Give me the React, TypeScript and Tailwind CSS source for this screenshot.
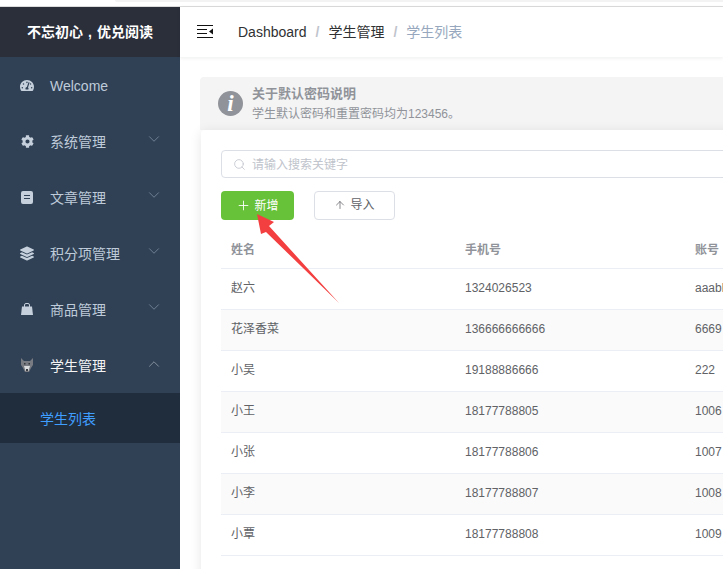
import { FaCog, FaLayerGroup, FaTachometerAlt } from "react-icons/fa";
import { ChevronDown, ChevronUp, Plus, ArrowUp, Search } from "lucide-react";

const font = "font-['Liberation_Sans','Noto_Sans_CJK_SC',sans-serif]";

function DocIcon() {
  return (
    <svg width="12" height="13" viewBox="0 0 12 13" className="text-[#c5d0dc]">
      <path fill="currentColor" fillRule="evenodd" d="M2 0h8a2 2 0 0 1 2 2v9a2 2 0 0 1-2 2H2a2 2 0 0 1-2-2V2a2 2 0 0 1 2-2zM3 4v1h6V4zm0 3v1h6V7z" />
    </svg>
  );
}

function BagIcon() {
  return (
    <svg width="12" height="12" viewBox="0 0 12 12" className="text-[#c5d0dc]">
      <path fill="currentColor" d="M1 3.5h10l1 8.5H0z" />
      <path fill="none" stroke="currentColor" d="M3.5 4V2a1.5 1.5 0 0 1 1.5-1.5h2A1.5 1.5 0 0 1 8.5 2v2" />
    </svg>
  );
}

function WolfIcon() {
  return (
    <svg width="12" height="14" viewBox="0 0 12 14">
      <path fill="#787c82" d="M0 0l3 3h6l3-3 0 7-2 3-2 4H4L2 10 0 7z" />
      <path fill="#d9dbdd" d="M3 8h6L7.5 13h-3z" />
      <rect x="5" y="11" width="2" height="2" fill="#3a3d42" />
      <rect x="3" y="5" width="1.5" height="1.5" fill="#33363b" />
      <rect x="7.5" y="5" width="1.5" height="1.5" fill="#33363b" />
    </svg>
  );
}

const menu = [
  { label: "Welcome", icon: <FaTachometerAlt size={15} className="text-[#c5d0dc]" />, arrow: false },
  { label: "系统管理", icon: <FaCog size={13} className="text-[#c5d0dc]" />, arrow: true },
  { label: "文章管理", icon: <DocIcon />, arrow: true },
  { label: "积分项管理", icon: <FaLayerGroup size={15} className="text-[#c5d0dc]" />, arrow: true },
  { label: "商品管理", icon: <BagIcon />, arrow: true },
];

const rows = [
  ["赵六", "1324026523", "aaabb"],
  ["花泽香菜", "136666666666", "6669"],
  ["小吴", "19188886666", "222"],
  ["小王", "18177788805", "1006"],
  ["小张", "18177788806", "1007"],
  ["小李", "18177788807", "1008"],
  ["小覃", "18177788808", "1009"],
];

function Sidebar() {
  return (
    <aside className="w-[180px] shrink-0 bg-[#304156] flex flex-col">
      <div className="h-[50px] bg-[#2b2f3a] flex items-center justify-center text-white text-sm font-bold">
        不忘初心<span className="mx-[5px]">,</span>优兑阅读
      </div>
      {menu.map((m) => (
        <div key={m.label} className="h-[56px] flex items-center text-sm text-[#bfcbd9]">
          <span className="w-[14px] ml-[20px] mr-[16px] flex justify-center">{m.icon}</span>
          <span className="pt-[2px]">{m.label}</span>
          {m.arrow && <ChevronDown size={18} strokeWidth={1} className="ml-auto mr-[17px] mb-[5px] text-[#8493a5]" />}
        </div>
      ))}
      <div className="h-[56px] flex items-center text-sm text-[#f4f4f5]">
        <span className="w-[14px] ml-[20px] mr-[16px] flex justify-center"><WolfIcon /></span>
        <span className="pt-[2px]">学生管理</span>
        <ChevronUp size={18} strokeWidth={1} className="ml-auto mr-[17px] mb-[3px] text-[#a0aab6]" />
      </div>
      <div className="h-[50px] bg-[#1f2d3d] flex items-center pl-[40px] pt-[2px] text-sm text-[#409eff]">学生列表</div>
    </aside>
  );
}

function Navbar() {
  return (
    <header className="h-[50px] shrink-0 bg-white shadow-[0_1px_4px_rgba(0,21,41,0.08)] flex items-center">
      <svg width="16" height="14" viewBox="0 0 16 14" className="ml-[17px]">
        <path d="M0 .5h16M0 4.5h10M0 8.5h10M0 12.5h16" stroke="#111" strokeWidth="1" />
        <path d="M16 3.5v6l-4-3z" fill="#111" />
      </svg>
      <nav className="ml-[25px] flex items-center text-sm">
        <span className="text-[#303133]">Dashboard</span>
        <span className="mx-[9px] font-bold text-[#c0c4cc]">/</span>
        <span className="text-[#303133]">学生管理</span>
        <span className="mx-[9px] font-bold text-[#c0c4cc]">/</span>
        <span className="text-[#97a8be]">学生列表</span>
      </nav>
    </header>
  );
}

function Notice() {
  return (
    <div className="ml-[20px] w-[560px] h-[53px] rounded-t bg-[#f4f4f5] flex items-center pl-[18px] text-[#909399]">
      <span className="w-[25px] h-[25px] shrink-0 rounded-full bg-[#909399] flex items-center justify-center text-white text-[23px] leading-none italic font-bold font-['Liberation_Serif',serif]">
        i
      </span>
      <div className="ml-[9px] pt-[2px]">
        <div className="text-[13px] font-bold leading-[18px]">关于默认密码说明</div>
        <div className="text-xs leading-[20px] pt-[1px]">学生默认密码和重置密码均为123456。</div>
      </div>
    </div>
  );
}

function Table() {
  return (
    <table className="mt-[9px] w-[640px] table-fixed border-collapse text-xs text-[#606266]">
      <colgroup>
        <col className="w-[234px]" />
        <col className="w-[230px]" />
        <col />
      </colgroup>
      <thead>
        <tr className="h-[39px] border-b border-[#ebeef5] text-[#909399] text-left">
          <th className="px-[10px] pt-[4px] font-bold">姓名</th>
          <th className="px-[10px] pt-[4px] font-bold">手机号</th>
          <th className="px-[10px] pt-[4px] font-bold">账号</th>
        </tr>
      </thead>
      <tbody>
        {rows.map((r, i) => (
          <tr key={r[0]} className={`h-[41px] border-b border-[#ebeef5] ${i % 2 === 1 ? "bg-[#fafafa]" : "bg-white"}`}>
            {r.map((c, j) => (
              <td key={j} className="px-[10px] pb-[2px]">{c}</td>
            ))}
          </tr>
        ))}
      </tbody>
    </table>
  );
}

export default function App() {
  return (
    <div className={`relative w-[723px] h-[569px] overflow-hidden bg-white ${font}`}>
      <div className="h-[6px] bg-white border-b border-[#dcdcdc] box-content">
        <div className="ml-[115px] h-[2px] rounded-bl bg-[#f3f3f3]" />
      </div>
      <div className="flex h-[562px]">
        <Sidebar />
        <main className="flex-1 min-w-0 flex flex-col">
          <Navbar />
          <div className="pt-[20px]">
            <Notice />
            <section className="ml-[21px] w-[560px] h-[460px] rounded bg-white shadow-[0_2px_12px_rgba(0,0,0,0.1)] px-[20px] pt-[20px]">
              <div className="h-[28px] w-[520px] rounded border border-[#dcdfe6] flex items-center pl-[11px] text-xs text-[#c0c4cc]">
                <Search size={13} strokeWidth={1.5} />
                <span className="ml-[6px] pt-[2px]">请输入搜索关键字</span>
              </div>
              <div className="mt-[13px] flex gap-[20px] text-xs">
                <button className="w-[73px] h-[29px] rounded bg-[#67c23a] text-white flex items-center justify-center gap-[3px]">
                  <Plus size={15} strokeWidth={1.4} />新增
                </button>
                <button className="w-[81px] h-[29px] rounded border border-[#dcdfe6] bg-white text-[#606266] flex items-center justify-center gap-[4px] pb-[2px]">
                  <ArrowUp size={12} strokeWidth={1.5} />导入
                </button>
              </div>
              <Table />
            </section>
          </div>
        </main>
      </div>
      {/* annotation arrow */}
      <svg className="absolute left-0 top-0 pointer-events-none" width="723" height="569">
        <polygon points="257,214 274,222 269,226 339,303 266,232 261,234" fill="#f33f3f" />
      </svg>
    </div>
  );
}
